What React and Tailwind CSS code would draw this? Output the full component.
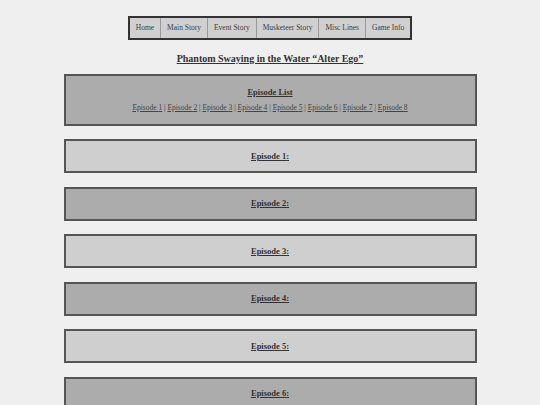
const navItems = ['Home', 'Main Story', 'Event Story', 'Musketeer Story', 'Misc Lines', 'Game Info'];
const episodes = [1, 2, 3, 4, 5, 6, 7, 8];

export default function App() {
  return (
    <div
      className="min-h-screen bg-[#efefef] pt-[16px] text-[#444]"
      style={{ fontFamily: '"Liberation Serif", "Times New Roman", serif' }}
    >
      <nav className="mx-auto flex w-fit border-2 border-[#333] bg-[#d0d0d0]">
        {navItems.map((item, i) => (
          <a
            key={item}
            href="#"
            className={
              'flex h-[20px] items-center px-[6px] text-[7.5px] text-[#3c3c3c] ' +
              (i > 0 ? 'border-l border-[#9a9a9a]' : '')
            }
          >
            {item}
          </a>
        ))}
      </nav>

      <h1 className="mt-[12px] text-center text-[10px] font-bold leading-[14px] text-[#333] underline">
        Phantom Swaying in the Water “Alter Ego”
      </h1>

      <div className="mx-auto mt-[8px] flex w-[413px] flex-col gap-[13.5px] pb-4">
        <div className="flex h-[51.5px] flex-col items-center border-2 border-[#555] bg-[#acacac] pt-[10px]">
          <a href="#" className="text-[8.5px] font-bold leading-[12px] text-[#333] underline">
            Episode List
          </a>
          <div className="mt-[5px] text-[7.5px] leading-[10px] text-[#444]">
            {episodes.map((n, i) => (
              <span key={n}>
                <a href="#" className="text-[#444] underline">Episode {n}</a>
                {i < episodes.length - 1 ? ' | ' : ''}
              </span>
            ))}
          </div>
        </div>

        {[1, 2, 3, 4, 5, 6, 7, 8].map((n) => (
          <div
            key={n}
            className={
              'flex h-[34px] items-center justify-center border-2 border-[#555] ' +
              (n % 2 === 1 ? 'bg-[#cfcfcf]' : 'bg-[#acacac]')
            }
          >
            <a href="#" className="text-[8.5px] font-bold text-[#333] underline">
              Episode {n}:
            </a>
          </div>
        ))}
      </div>
    </div>
  );
}
